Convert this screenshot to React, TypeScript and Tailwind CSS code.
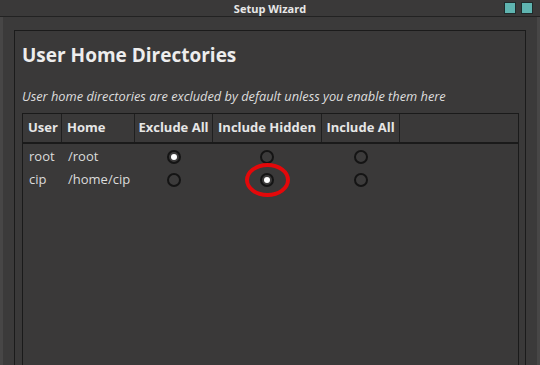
import React from 'react'

type Row = { user: string; home: string; choice: 0 | 1 | 2 }

const rows: Row[] = [
  { user: 'root', home: '/root', choice: 0 },
  { user: 'cip', home: '/home/cip', choice: 1 },
]

function Radio({ checked, marked }: { checked: boolean; marked?: boolean }) {
  return (
    <div className="relative flex items-center justify-center">
      <div className="w-[14px] h-[14px] rounded-full border-2 border-[#141414] bg-[#3c3b3b] flex items-center justify-center">
        {checked && <div className="w-[6px] h-[6px] rounded-full bg-white" />}
      </div>
      {marked && (
        <div className="absolute w-[45px] h-[34px] rounded-[50%] border-4 border-[#e4080a]" />
      )}
    </div>
  )
}

export default function App() {
  const cols = 'grid grid-cols-[39px_73px_78px_109px_78px_1fr]'

  return (
    <div
      className="w-[540px] h-[365px] flex flex-col overflow-hidden bg-[#3b3a3a] text-[#e4e4e4]"
      style={{ fontFamily: '"Open Sans", "Noto Sans", sans-serif' }}
    >
      {/* title bar */}
      <div className="h-[17px] grid grid-cols-[1fr_auto_1fr] items-center bg-[#3a3939] border-b border-[#222]">
        <div />
        <div className="text-[11px] font-bold leading-none text-[#e8e8e8]">Setup Wizard</div>
        <div className="flex justify-end gap-[5px] pr-[7px]">
          <div className="w-[12px] h-[12px] bg-[#5fb4b0] border border-[#1f2b2b]" />
          <div className="w-[12px] h-[12px] bg-[#5fb4b0] border border-[#1f2b2b]" />
        </div>
      </div>

      <div className="flex-1 flex flex-col pt-[13px] px-[11px] border-l-[3px] border-r-[3px] border-[#474646] bg-[#3b3a3a]">
        <div className="flex-1 flex flex-col border border-[#1b1b1b] border-b-0 bg-[#3a3939] pl-[7px] pr-[6px] pt-[12px]">
          <h1 className="text-[19px] leading-[24px] font-bold text-[#ededed]">User Home Directories</h1>
          <p className="mt-[20px] text-[12.8px] leading-[18px] italic text-[#dedede]">
            User home directories are excluded by default unless you enable them here
          </p>

          <div className="mt-[8px] flex-1 flex flex-col border border-[#1a1a1a] border-b-0">
            <div className={`${cols} h-[30px] border-b-2 border-[#1a1a1a] text-[13px] font-bold text-[#e6e6e6]`}>
              {['User', 'Home', 'Exclude All', 'Include Hidden', 'Include All', ''].map((h, i) => (
                <div
                  key={i}
                  className={`flex items-center ${i < 2 ? 'pl-[5px]' : 'justify-center'} ${i < 5 ? 'border-r border-[#1f1f1f]' : ''}`}
                >
                  {h}
                </div>
              ))}
            </div>

            <div className="pt-[1px]">
              {rows.map((r) => (
                <div key={r.user} className={`${cols} h-[23px] text-[13px] text-[#dcdcdc]`}>
                  <div className="flex items-center pl-[6px]">{r.user}</div>
                  <div className="flex items-center pl-[6px]">{r.home}</div>
                  <div className="flex items-center justify-center pr-[1px]">
                    <Radio checked={r.choice === 0} />
                  </div>
                  <div className="flex items-center justify-center pr-[1px]">
                    <Radio checked={r.choice === 1} marked={r.choice === 1} />
                  </div>
                  <div className="flex items-center justify-center">
                    <Radio checked={r.choice === 2} />
                  </div>
                  <div />
                </div>
              ))}
            </div>
          </div>
        </div>
      </div>
    </div>
  )
}
